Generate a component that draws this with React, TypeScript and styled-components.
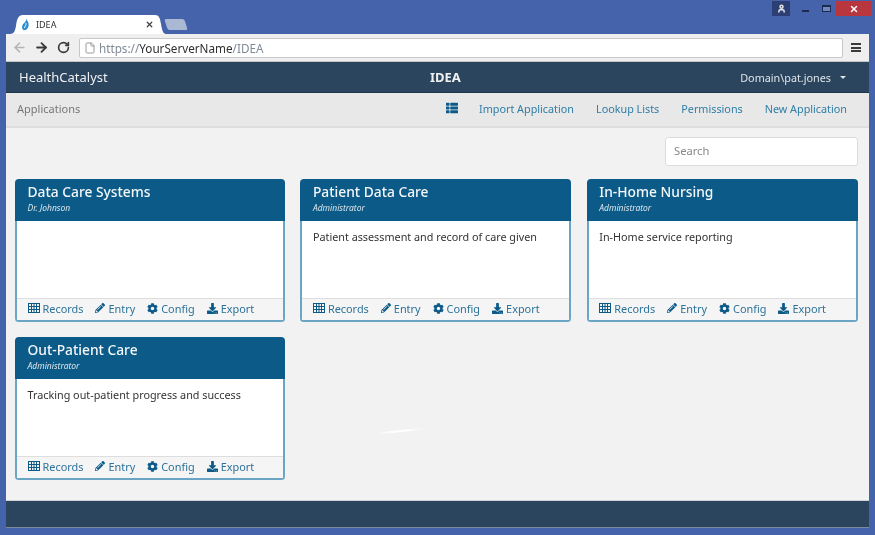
import styled, { createGlobalStyle } from 'styled-components';
import { ArrowLeft, ArrowRight, RotateCw, File, X, User } from 'lucide-react';
import { FaThList, FaPencilAlt, FaCog, FaDownload } from 'react-icons/fa';

interface App_ {
  title: string;
  owner: string;
  description: string;
}

const apps: App_[] = [
  { title: 'Data Care Systems', owner: 'Dr. Johnson', description: '' },
  { title: 'Patient Data Care', owner: 'Administrator', description: 'Patient assessment and record of care given' },
  { title: 'In-Home Nursing', owner: 'Administrator', description: 'In-Home service reporting' },
  { title: 'Out-Patient Care', owner: 'Administrator', description: 'Tracking out-patient progress and success' },
];

const GlobalStyle = createGlobalStyle`
  html, body {
    margin: 0;
    padding: 0;
    background: #4563ab;
  }
  * {
    box-sizing: border-box;
  }
`;

const Frame = styled.div`
  width: 875px;
  height: 535px;
  padding: 0 6px 7px;
  background: #4563ab;
  display: flex;
  flex-direction: column;
  font-family: 'Noto Sans', sans-serif;
  overflow: hidden;
  filter: blur(0.4px);
`;

const TitleBar = styled.div`
  height: 34px;
  flex: none;
  display: flex;
  justify-content: space-between;
  align-items: flex-start;
`;

const TabStrip = styled.div`
  display: flex;
  align-items: flex-end;
  height: 34px;
  padding-left: 4px;
`;

const Tab = styled.div`
  width: 156px;
  height: 19px;
  background: #fff;
  clip-path: path('M0 19 C4 19 5 16 6 11 C7 4 8 0 13 0 L145 0 C149 0 150 3 151 9 C152 15 153 19 156 19 Z');
  display: flex;
  align-items: center;
  padding: 0 12px 0 11px;
  font-size: 9px;
  color: #333;
  gap: 6px;
`;

const TabTitle = styled.span`
  flex: 1;
`;

const NewTab = styled.div`
  width: 20px;
  height: 11px;
  margin: 0 0 4px 0;
  background: #a9b9d4;
  border-radius: 2px;
  transform: skewX(18deg);
`;

const WindowControls = styled.div`
  display: flex;
  align-items: center;
  height: 15px;
  margin-top: 1px;
  margin-right: -2px;
`;

const UserBox = styled.div`
  width: 18px;
  height: 15px;
  background: #2b3f75;
  color: #e6e6e6;
  display: flex;
  align-items: center;
  justify-content: center;
  margin-right: 12px;
`;

const Minimize = styled.div`
  width: 7px;
  height: 2px;
  margin-top: 5px;
  background: #1b2a4e;
  margin-right: 13px;
`;

const Maximize = styled.div`
  width: 9px;
  height: 7px;
  border: 1px solid #1b2a4e;
  border-top-width: 2px;
  background: #6f88c4;
  margin-right: 5px;
`;

const CloseBox = styled.div`
  width: 35px;
  height: 15px;
  background: #b8373e;
  color: #fff;
  display: flex;
  align-items: center;
  justify-content: center;
`;

const Toolbar = styled.div`
  height: 28px;
  flex: none;
  background: #efefef;
  border-bottom: 1px solid #c4c4c4;
  display: flex;
  align-items: center;
  padding: 0 8px 0 6px;
  color: #333;
`;

const NavButton = styled.div<{ $muted?: boolean }>`
  width: 15px;
  margin-right: 7px;
  display: flex;
  justify-content: center;
  color: ${p => (p.$muted ? '#b5b5b5' : '#3a3a3a')};
`;

const UrlBar = styled.div`
  flex: 1;
  height: 20px;
  margin: 1px 8px 0 1px;
  background: #fff;
  border: 1px solid #c8c8c8;
  border-radius: 2px;
  display: flex;
  align-items: center;
  gap: 3px;
  padding-left: 4px;
  font-size: 11.7px;
  color: #7f8a96;
`;

const UrlHost = styled.span`
  color: #2f2f2f;
`;

const Burger = styled.div`
  width: 10px;
  height: 9px;
  border-top: 2px solid #3a3a3a;
  border-bottom: 2px solid #3a3a3a;
  position: relative;

  &::after {
    content: '';
    position: absolute;
    left: 0;
    right: 0;
    top: 1.5px;
    height: 2px;
    background: #3a3a3a;
  }
`;

const NavBar = styled.div`
  height: 31px;
  flex: none;
  background: #2b455f;
  border-bottom: 1px solid #1f3448;
  display: grid;
  grid-template-columns: 411px 1fr auto;
  align-items: center;
  padding: 0 23px 0 13px;
  color: #f0f0f0;
`;

const Brand = styled.div`
  font-size: 13px;
`;

const AppName = styled.div`
  font-size: 13px;
  font-weight: 700;
`;

const UserMenu = styled.div`
  font-size: 10.8px;
  display: flex;
  align-items: center;
  gap: 9px;
  color: #dfe4e8;
`;

const Caret = styled.span`
  width: 0;
  height: 0;
  border: 3px solid transparent;
  border-top-color: #dfe4e8;
  border-bottom: 0;
`;

const SubNav = styled.div`
  height: 35px;
  flex: none;
  background: #e8e8e8;
  border-bottom: 2px solid #dedede;
  display: flex;
  align-items: center;
  justify-content: space-between;
  padding: 0 22px 3px 11px;
`;

const PageTitle = styled.div`
  font-size: 11px;
  color: #777;
`;

const SubNavLinks = styled.div`
  display: flex;
  align-items: center;
  gap: 22px;
  font-size: 10.8px;
  color: #2e7ea6;
`;

const ListIcon = styled.span`
  display: flex;
  color: #0b5a87;
  margin-right: -1px;
`;

const Content = styled.div`
  position: relative;
  flex: 1;
  background: #f2f2f2;
  padding: 9px 11px 0 9px;
`;

const SearchRow = styled.div`
  display: flex;
  justify-content: flex-end;
  margin-bottom: 13px;
`;

const SearchBox = styled.div`
  width: 193px;
  height: 29px;
  background: #fff;
  border: 1px solid #dcdcdc;
  border-radius: 3px;
  padding: 0 0 2px 8px;
  display: flex;
  align-items: center;
  font-size: 11.2px;
  color: #888;
`;

const CardGrid = styled.div`
  display: grid;
  grid-template-columns: 270px 271px 271px;
  column-gap: 15.4px;
  row-gap: 15px;
`;

const Card = styled.div`
  height: 143px;
  border-radius: 4px;
  display: flex;
  flex-direction: column;
  overflow: hidden;
`;

const CardHead = styled.div`
  height: 42px;
  flex: none;
  background: #0b5a87;
  padding: 3px 12.5px 0;
  color: #f4f7f9;
`;

const CardTitle = styled.div`
  font-size: 13.8px;
  line-height: 19px;
  font-weight: 500;
`;

const CardOwner = styled.div`
  font-size: 8.5px;
  font-style: italic;
  line-height: 11px;
  margin-top: 1px;
  color: #dce6ec;
`;

const CardBody = styled.div`
  flex: 1;
  background: #fff;
  border: solid #6aa5c5;
  border-width: 0 2px;
  padding: 8px 10.5px 0;
  font-size: 10.8px;
  line-height: 15px;
  color: #333;
`;

const CardFooter = styled.div`
  height: 24px;
  flex: none;
  background: #f5f5f5;
  border: solid #6aa5c5;
  border-width: 0 2px 2px;
  box-shadow: inset 0 1px 0 #dedede;
  display: flex;
  align-items: center;
  gap: 12px;
  padding: 0 0 2px 10.5px;
  font-size: 10.9px;
  color: #2c7199;
`;

const FooterLink = styled.span`
  display: flex;
  align-items: center;
  gap: 3px;

  svg {
    color: #0b5a87;
  }
`;

const Glare = styled.div`
  position: absolute;
  left: 371px;
  top: 302px;
  width: 48px;
  height: 2px;
  background: linear-gradient(90deg, transparent, #fff 30%, #fff 60%, transparent);
  transform: rotate(-6deg);
`;

const PageFooter = styled.div`
  height: 28px;
  flex: none;
  background: #2b455f;
  border-top: 1px solid #d0d4d8;
  border-bottom: 1px solid #7d8a99;
`;

const Flame = () => (
  <svg width="9" height="13" viewBox="0 0 10 13">
    <path d="M6 0C7 3 9 4 8.5 7.5 8 11 5.5 13 3 13 1 12 .5 9 2 6.5 3.5 4.5 6 3 6 0Z" fill="#2a8fd0" />
    <path d="M5.5 5C5.8 7 4.5 9 3.5 10.5" stroke="#fff" strokeWidth="1" fill="none" />
  </svg>
);

const TableIcon = () => (
  <svg width="12" height="10" viewBox="0 0 12 10" fill="none" stroke="currentColor" strokeWidth="1">
    <rect x="0.5" y="0.5" width="11" height="9" />
    <path d="M0 3.5H12M0 6.5H12M3.5 0V10M6 0V10M8.5 0V10" />
  </svg>
);

const links = [
  { label: 'Records', icon: <TableIcon /> },
  { label: 'Entry', icon: <FaPencilAlt size={10} /> },
  { label: 'Config', icon: <FaCog size={11} /> },
  { label: 'Export', icon: <FaDownload size={11} /> },
];

const App = () => (
  <Frame>
    <GlobalStyle />
    <TitleBar>
      <TabStrip>
        <Tab>
          <Flame />
          <TabTitle>IDEA</TabTitle>
          <X size={9} strokeWidth={3.5} color="#444" />
        </Tab>
        <NewTab />
      </TabStrip>
      <WindowControls>
        <UserBox>
          <User size={9} strokeWidth={4} />
        </UserBox>
        <Minimize />
        <Maximize />
        <CloseBox>
          <X size={10} strokeWidth={3.5} />
        </CloseBox>
      </WindowControls>
    </TitleBar>
    <Toolbar>
      <NavButton $muted>
        <ArrowLeft size={15} strokeWidth={2.5} />
      </NavButton>
      <NavButton>
        <ArrowRight size={15} strokeWidth={3} />
      </NavButton>
      <NavButton>
        <RotateCw size={13} strokeWidth={3} />
      </NavButton>
      <UrlBar>
        <File size={12} color="#999" />
        <span>
          https://<UrlHost>YourServerName</UrlHost>/IDEA
        </span>
      </UrlBar>
      <Burger />
    </Toolbar>
    <NavBar>
      <Brand>HealthCatalyst</Brand>
      <AppName>IDEA</AppName>
      <UserMenu>
        Domain\pat.jones
        <Caret />
      </UserMenu>
    </NavBar>
    <SubNav>
      <PageTitle>Applications</PageTitle>
      <SubNavLinks>
        <ListIcon>
          <FaThList size={12} />
        </ListIcon>
        <span>Import Application</span>
        <span>Lookup Lists</span>
        <span>Permissions</span>
        <span>New Application</span>
      </SubNavLinks>
    </SubNav>
    <Content>
      <SearchRow>
        <SearchBox>Search</SearchBox>
      </SearchRow>
      <CardGrid>
        {apps.map(app => (
          <Card key={app.title}>
            <CardHead>
              <CardTitle>{app.title}</CardTitle>
              <CardOwner>{app.owner}</CardOwner>
            </CardHead>
            <CardBody>{app.description}</CardBody>
            <CardFooter>
              {links.map(link => (
                <FooterLink key={link.label}>
                  {link.icon}
                  {link.label}
                </FooterLink>
              ))}
            </CardFooter>
          </Card>
        ))}
      </CardGrid>
      <Glare />
    </Content>
    <PageFooter />
  </Frame>
);

export default App;
